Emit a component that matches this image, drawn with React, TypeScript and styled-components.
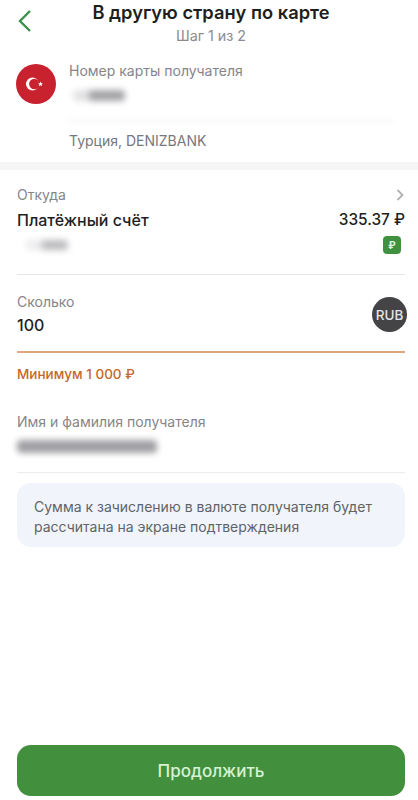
import styled, { createGlobalStyle } from "styled-components";

const GlobalStyle = createGlobalStyle`
  html, body {
    margin: 0;
    padding: 0;
    background: #fff;
  }
  body {
    font-family: Inter, "Noto Sans", sans-serif;
    color: #1f1f22;
  }
`;

const Screen = styled.div`
  width: 418px;
  height: 800px;
  display: flex;
  flex-direction: column;
  overflow: hidden;
  box-sizing: border-box;
`;

const Header = styled.header`
  position: relative;
  height: 48px;
  padding-left: 4px;
  box-sizing: border-box;
  display: flex;
  flex-direction: column;
  align-items: center;
`;

const BackButton = styled.div`
  position: absolute;
  left: 17px;
  top: 9px;
  display: flex;
`;

const Title = styled.h1`
  margin: 0;
  font-size: 18.3px;
  line-height: 24px;
  font-weight: 600;
`;

const Subtitle = styled.div`
  font-size: 14.3px;
  line-height: 24px;
  color: #8b8b90;
`;

const Recipient = styled.section`
  display: flex;
  gap: 13px;
  padding: 14px 16px 0;
  height: 114px;
  box-sizing: border-box;
`;

const FlagBox = styled.div`
  flex: none;
  width: 40px;
  height: 40px;
  margin-top: 2px;
  display: flex;
`;

const RecipientBody = styled.div`
  display: flex;
  flex-direction: column;
`;

const Label = styled.div`
  font-size: 14px;
  line-height: 18px;
  color: #85858a;
`;

const Blurred = styled.div<{ $w: number; $h: number; $tone: string }>`
  width: ${(p) => p.$w}px;
  height: ${(p) => p.$h}px;
  background: ${(p) => p.$tone};
  border-radius: 4px;
  filter: blur(3px);
`;

const CardNumber = styled.div`
  margin-top: 10px;
  margin-left: 4px;
`;

const BankDetails = styled.div`
  margin-top: 18px;
`;

const Country = styled.div`
  margin-top: 10px;
  font-size: 14px;
  line-height: 18px;
  color: #77777c;
`;

const Band = styled.div`
  height: 8px;
  background: #f5f5f5;
`;

const Form = styled.div`
  display: flex;
  flex-direction: column;
  padding: 0 13px 0 17px;
  flex: 1;
`;

const FromBlock = styled.section`
  height: 105px;
  padding-top: 16px;
  box-sizing: border-box;
  border-bottom: 1px solid #e6e6e8;
`;

const Row = styled.div`
  display: flex;
  justify-content: space-between;
  align-items: center;
`;

const AccountRow = styled(Row)`
  margin-top: 5px;
`;

const AccountNumber = styled.div`
  margin-left: 9px;
`;

const Value = styled.div`
  font-size: 16px;
  line-height: 22px;
  font-weight: 500;
  margin-top: 5px;
`;

const Balance = styled(Value)`
  font-size: 15.4px;
`;

const AccountBadge = styled.div`
  width: 18px;
  height: 18px;
  margin-right: 4px;
  border-radius: 4px;
  background: #3f913f;
  color: #dff3df;
  font-size: 10px;
  font-weight: 700;
  display: flex;
  align-items: center;
  justify-content: center;
`;

const AmountBlock = styled.section`
  height: 78px;
  padding-top: 18px;
  box-sizing: border-box;
  border-bottom: 2px solid #dfa77f;
  display: flex;
  justify-content: space-between;
`;

const AmountValue = styled.div`
  font-size: 16px;
  line-height: 22px;
  font-weight: 500;
  margin-top: 3px;
`;

const CurrencyChip = styled.div`
  width: 35px;
  height: 35px;
  margin: 4px -2px 0 0;
  border-radius: 50%;
  background: #444446;
  color: #e4e4e4;
  font-size: 13.5px;
  font-weight: 500;
  display: flex;
  align-items: center;
  justify-content: center;
`;

const ErrorText = styled.div`
  margin-top: 12px;
  font-size: 13.5px;
  line-height: 18px;
  font-weight: 500;
  color: #c4692a;
`;

const NameBlock = styled.section`
  margin-top: 30px;
  height: 60px;
  box-sizing: border-box;
  border-bottom: 1px solid #ececee;
  display: flex;
  flex-direction: column;
  gap: 9px;
`;

const Notice = styled.div`
  margin-top: 10px;
  height: 64px;
  box-sizing: border-box;
  padding: 14px 17px;
  border-radius: 14px;
  background: #f1f5fb;
  font-size: 14px;
  line-height: 19.5px;
  color: #5f6368;
`;

const Spacer = styled.div`
  flex: 1;
`;

const ContinueButton = styled.button`
  margin-bottom: 4px;
  height: 51px;
  border: none;
  border-radius: 14px;
  background: #42903d;
  color: #d5f2d3;
  font-family: inherit;
  font-size: 17px;
  font-weight: 500;
`;

function TurkeyFlag() {
  return (
    <svg width="40" height="40" viewBox="0 0 40 40">
      <circle cx="20" cy="20" r="20" fill="#c8222f" />
      <circle cx="16.5" cy="20" r="6.5" fill="#fff" />
      <circle cx="18.3" cy="20" r="5.2" fill="#c8222f" />
      <path d="M24.5 17.6l.7 1.7 1.8.1-1.4 1.1.5 1.8-1.6-1-1.5 1 .4-1.8-1.4-1.1 1.8-.1z" fill="#fff" />
    </svg>
  );
}

export default function App() {
  return (
    <>
      <GlobalStyle />
      <Screen>
        <Header>
          <BackButton>
            <svg width="16" height="24" viewBox="0 0 16 24" fill="none">
              <path d="M13 2L3 12l10 10" stroke="#3c8f4c" strokeWidth="2.4" />
            </svg>
          </BackButton>
          <Title>В другую страну по карте</Title>
          <Subtitle>Шаг 1 из 2</Subtitle>
        </Header>

        <Recipient>
          <FlagBox>
            <TurkeyFlag />
          </FlagBox>
          <RecipientBody>
            <Label>Номер карты получателя</Label>
            <CardNumber>
              <Blurred $w={52} $h={11} $tone="linear-gradient(90deg, #e2e2e4 0 26%, #a4a4a8 36%)" />
            </CardNumber>
            <BankDetails>
              <Blurred $w={325} $h={3} $tone="#f6f6f7" />
            </BankDetails>
            <Country>Турция, DENIZBANK</Country>
          </RecipientBody>
        </Recipient>

        <Band />

        <Form>
          <FromBlock>
            <Row>
              <Label>Откуда</Label>
              <svg width="9" height="12" viewBox="0 0 9 12" fill="none">
                <path d="M1.5 1l5 5-5 5" stroke="#b0b0b4" strokeWidth="1.8" />
              </svg>
            </Row>
            <Row>
              <Value>Платёжный счёт</Value>
              <Balance>335.37 ₽</Balance>
            </Row>
            <AccountRow>
              <AccountNumber>
                <Blurred $w={42} $h={10} $tone="linear-gradient(90deg, #ececee 0 32%, #bcbcc0 44%)" />
              </AccountNumber>
              <AccountBadge>₽</AccountBadge>
            </AccountRow>
          </FromBlock>

          <AmountBlock>
            <div>
              <Label>Сколько</Label>
              <AmountValue>100</AmountValue>
            </div>
            <CurrencyChip>RUB</CurrencyChip>
          </AmountBlock>

          <ErrorText>Минимум 1 000 ₽</ErrorText>

          <NameBlock>
            <Label>Имя и фамилия получателя</Label>
            <Blurred $w={140} $h={13} $tone="#a0a0a4" />
          </NameBlock>

          <Notice>
            Сумма к зачислению в валюте получателя будет рассчитана на экране подтверждения
          </Notice>

          <Spacer />

          <ContinueButton>Продолжить</ContinueButton>
        </Form>
      </Screen>
    </>
  );
}
